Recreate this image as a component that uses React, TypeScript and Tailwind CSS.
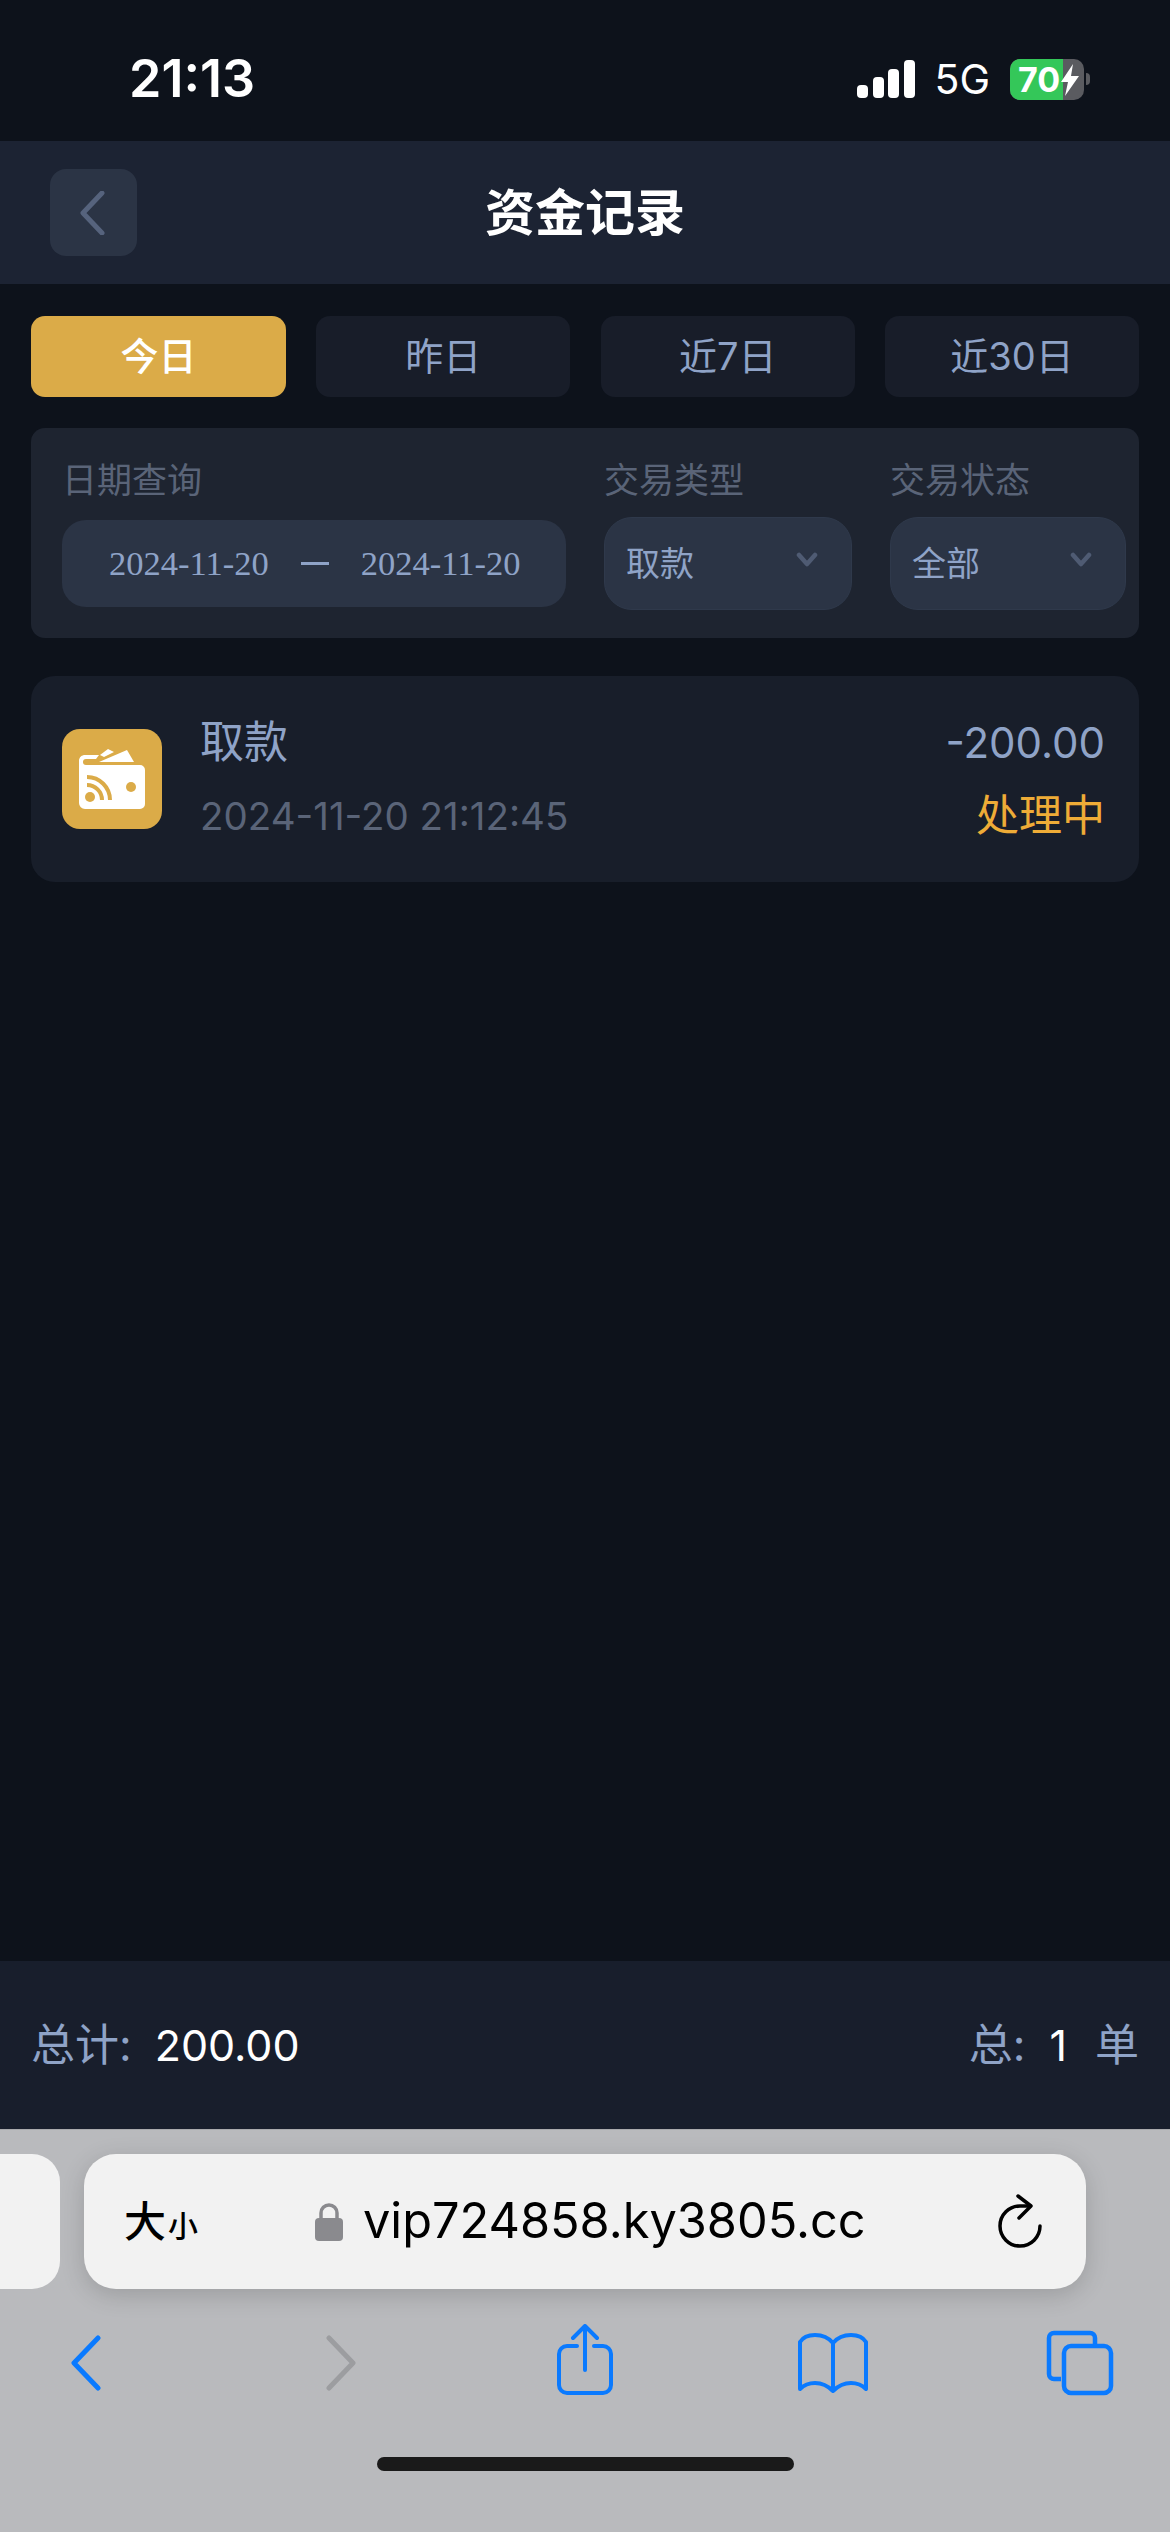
import React from "react";

const cjk = "font-['Inter','Noto_Sans_CJK_SC',sans-serif]";

function Chevron() {
  return (
    <svg width="24" height="16" viewBox="0 0 24 16" fill="none" stroke="#4f5b73" strokeWidth="4.5" strokeLinecap="round" strokeLinejoin="round">
      <path d="M4 3l8 9 8-9" />
    </svg>
  );
}

function Tab({ label, active }: { label: string; active?: boolean }) {
  return (
    <div className={active
      ? "flex h-[81px] w-[255px] items-center justify-center rounded-[14px] bg-[#dbab48] text-[38px] font-medium text-white"
      : "flex h-[81px] w-[254px] items-center justify-center rounded-[14px] bg-[#181d29] text-[38px] text-[#8fa3c7]"}>
      {label}
    </div>
  );
}

function Select({ label, value, width, gap }: { label: string; value: string; width: string; gap: string }) {
  return (
    <div className={`flex flex-col ${width}`}>
      <div className="h-[52px] text-[35px] leading-[52px] text-[#5a6478]">{label}</div>
      <div className={`mt-[11px] flex h-[93px] items-center rounded-[28px] border border-[#2f394b] bg-[#2b3445] pl-[21px] ${gap}`}>
        <span className="text-[34px] text-[#8fa3c7]">{value}</span>
        <span className="mb-[8px]"><Chevron /></span>
      </div>
    </div>
  );
}

export default function App() {
  return (
    <div className={`flex h-[2532px] w-[1170px] flex-col overflow-hidden bg-[#0d121b] ${cjk}`}>
      {/* status bar */}
      <div className="flex h-[141px] items-center pt-[17px]">
        <div className="ml-[129px] text-[52px] font-semibold leading-none text-white">21:13</div>
        <div className="ml-auto mr-[80px] flex items-center">
          <svg width="58" height="38" viewBox="0 0 58 38" fill="#fff">
            <rect x="0" y="25" width="11" height="13" rx="4" />
            <rect x="16" y="17" width="11" height="21" rx="4" />
            <rect x="31" y="9" width="11" height="29" rx="4" />
            <rect x="47" y="0" width="11" height="38" rx="4" />
          </svg>
          <span className="ml-[19px] text-[41px] leading-none text-white">5G</span>
          <div className="relative ml-[20px] flex h-[41px] w-[74px] rounded-[10px] bg-[#5a5b60]">
            <div className="h-full w-[53px] rounded-l-[10px] bg-[#34c759]" />
            <span className="absolute left-[8px] top-0 text-[34px] font-bold leading-[41px] text-white">70</span>
            <svg className="absolute left-[50px] top-[5px]" width="20" height="32" viewBox="0 0 20 32" fill="#fff">
              <path d="M13 0L1 18h7l-3 14L19 12h-8z" />
            </svg>
          </div>
          <div className="ml-[2px] h-[12px] w-[4px] rounded-r-full bg-[#5a5b60]" />
        </div>
      </div>

      {/* nav */}
      <div className="relative flex h-[143px] items-center justify-center bg-[#1c2333]">
        <div className="absolute left-[50px] top-[28px] flex h-[87px] w-[87px] items-center justify-center rounded-[16px] bg-[#2b3445]">
          <svg className="mr-[3px]" width="26" height="44" viewBox="0 0 26 44" fill="none" stroke="#56637d" strokeWidth="5" strokeLinecap="round" strokeLinejoin="round">
            <path d="M23 2L4 22l19 20" />
          </svg>
        </div>
        <div className="text-[50px] font-semibold leading-none text-white">资金记录</div>
      </div>

      {/* tabs */}
      <div className="mx-[31px] mt-[32px] flex justify-between">
        <Tab label="今日" active />
        <Tab label="昨日" />
        <Tab label="近7日" />
        <Tab label="近30日" />
      </div>

      {/* filter */}
      <div className="mx-[31px] mt-[31px] flex h-[210px] rounded-[14px] bg-[#1e2430] pl-[31px] pt-[26px]">
        <div className="flex w-[504px] flex-col">
          <div className="h-[52px] text-[35px] leading-[52px] text-[#5a6478]">日期查询</div>
          <div className="mt-[14px] flex h-[87px] items-center rounded-[24px] bg-[#2b3445] pl-[47px] font-['Liberation_Serif',serif] text-[34.500px] text-[#8fa3c7]">
            <span>2024-11-20</span>
            <span className="ml-[32px] h-[3px] w-[28px] bg-[#8fa3c7]" />
            <span className="ml-[32px]">2024-11-20</span>
          </div>
        </div>
        <div className="ml-[38px]">
          <Select label="交易类型" value="取款" width="w-[248px]" gap="gap-[101px]" />
        </div>
        <div className="ml-[38px]">
          <Select label="交易状态" value="全部" width="w-[236px]" gap="gap-[89px]" />
        </div>
      </div>

      {/* record card */}
      <div className="mx-[31px] mt-[38px] flex h-[206px] items-center rounded-[24px] bg-[#181e2a] pl-[31px] pr-[34px]">
        <div className="flex h-[100px] w-[100px] items-center justify-center rounded-[18px] bg-[#dbab48]">
          <svg width="66" height="60" viewBox="0 0 66 60" fill="#fff">
            <path d="M0 12C0 8 3 6 6 6h14l-3 4H7a3 3 0 0 0-3 3 3 3 0 0 0 3 3h54a5 5 0 0 1 5 5v34a5 5 0 0 1-5 5H6a6 6 0 0 1-6-6z" />
            <path d="M20 13L48 1l7 12z" />
            <path d="M21 6l8-6 6 3-10 5z" />
            <circle cx="11" cy="48" r="5" fill="#dbab48" />
            <path d="M8 36a15 15 0 0 1 15 15" fill="none" stroke="#dbab48" strokeWidth="4" />
            <path d="M8 28a23 23 0 0 1 23 23" fill="none" stroke="#dbab48" strokeWidth="4" />
            <circle cx="52" cy="38" r="5" fill="#dbab48" />
          </svg>
        </div>
        <div className="ml-[38px] flex flex-col">
          <div className="text-[44px] leading-[52px] text-[#8fa3c7]">取款</div>
          <div className="mt-[22px] text-[38.500px] leading-[52px] text-[#5a6478]">2024-11-20 21:12:45</div>
        </div>
        <div className="ml-auto flex flex-col items-end">
          <div className="text-[42px] leading-[52px] text-[#8fa3c7]">-200.00</div>
          <div className="mt-[20px] text-[43px] leading-[52px] text-[#eeac37]">处理中</div>
        </div>
      </div>

      {/* footer */}
      <div className="mt-auto flex h-[168px] items-center justify-between bg-[#181e2c] px-[31px] text-[44px] text-[#8fa3c7]">
        <div className="flex items-center">
          <span>总计:</span>
          <span className="ml-[23px] text-[43px] text-white">200.00</span>
        </div>
        <div className="flex items-center">
          <span>总:</span>
          <span className="ml-[24px] text-[43px] text-white">1</span>
          <span className="ml-[28px]">单</span>
        </div>
      </div>

      {/* safari toolbar */}
      <div className="flex h-[403px] flex-col border-t border-[#a9aaad] bg-[#b9babd]">
        <div className="mt-[24px] flex h-[135px]">
          <div className="w-[60px] rounded-r-[28px] bg-[#f2f2f2]" />
          <div className="ml-[24px] flex w-[1002px] items-center rounded-[32px] bg-[#f2f2f2] pl-[40px] pr-[43px] font-['Inter','Noto_Sans_CJK_SC',sans-serif] text-black shadow-[0_6px_24px_rgba(0,0,0,0.16)]">
            <div className="flex w-[73px] items-baseline font-medium">
              <span className="text-[42px] leading-none">大</span>
              <span className="ml-[2px] text-[30px] leading-none">小</span>
            </div>
            <svg className="ml-[118px]" width="28" height="38" viewBox="0 0 28 38" fill="none">
              <path d="M6 16V10a8 8 0 0 1 16 0v6" stroke="#8a8a8e" strokeWidth="3.500" />
              <rect x="0" y="15" width="28" height="23" rx="4" fill="#8a8a8e" />
            </svg>
            <span className="ml-[20px] text-[48.700px] leading-none">vip724858.ky3805.cc</span>
            <svg className="ml-auto" width="46" height="58" viewBox="0 0 46 58" fill="none" stroke="#000" strokeWidth="3.500" strokeLinecap="round" strokeLinejoin="round">
              <path d="M43 33a20 20 0 1 1-20-20h10" />
              <path d="M21 3l13 10-12 12" />
            </svg>
          </div>
        </div>
        <div className="mt-[38px] flex h-[72px] items-center">
          <svg className="ml-[71px]" width="30" height="56" viewBox="0 0 30 56" fill="none" stroke="#0a7aff" strokeWidth="5" strokeLinecap="round" strokeLinejoin="round">
            <path d="M27 3L3 28l24 25" />
          </svg>
          <svg className="ml-[225px]" width="30" height="56" viewBox="0 0 30 56" fill="none" stroke="#9c9da0" strokeWidth="5" strokeLinecap="round" strokeLinejoin="round">
            <path d="M3 3l24 25L3 53" />
          </svg>
          <svg className="mb-[6px] ml-[201px]" width="56" height="72" viewBox="0 0 56 72" fill="none" stroke="#0a7aff" strokeWidth="4" strokeLinecap="round" strokeLinejoin="round">
            <path d="M28 3v43M16 14L28 2l12 12" />
            <path d="M20 22H10a8 8 0 0 0-8 8v31a8 8 0 0 0 8 8h36a8 8 0 0 0 8-8V30a8 8 0 0 0-8-8H37" />
          </svg>
          <svg className="ml-[184px]" width="72" height="60" viewBox="0 0 72 60" fill="none" stroke="#0a7aff" strokeWidth="4" strokeLinecap="round" strokeLinejoin="round">
            <path d="M36 10C31 4 25 2 18 2 12 2 6 4 3 9v47c4-4 9-6 15-6 7 0 13 3 18 8 5-5 11-8 18-8 6 0 11 2 15 6V9c-3-5-9-7-15-7-7 0-13 2-18 8v48" />
          </svg>
          <svg className="ml-[177px]" width="68" height="66" viewBox="0 0 68 66" fill="none" stroke="#0a7aff" strokeWidth="4.500" strokeLinejoin="round">
            <path d="M15 49H8a5 5 0 0 1-5-5V8a5 5 0 0 1 5-5h36a5 5 0 0 1 5 5v7" />
            <rect x="18" y="16" width="47" height="47" rx="7" />
          </svg>
        </div>
        <div className="mx-auto mt-[58px] h-[14px] w-[417px] rounded-full bg-[#1a1a1a]" />
      </div>
    </div>
  );
}
